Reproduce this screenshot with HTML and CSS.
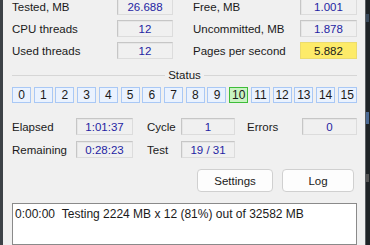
FILE: index.html
```html
<!DOCTYPE html>
<html>
<head>
<meta charset="utf-8">
<link rel="stylesheet" href="styles.css">
</head>
<body>
<div class="screen">
  <div class="edge-left"></div>
  <div class="window">
    <div class="stats">
      <span class="lbl">Tested, MB</span><span class="val">26.688</span>
      <span class="lbl">Free, MB</span><span class="val">1.001</span>
      <span class="lbl">CPU threads</span><span class="val">12</span>
      <span class="lbl">Uncommitted, MB</span><span class="val">1.878</span>
      <span class="lbl">Used threads</span><span class="val">12</span>
      <span class="lbl">Pages per second</span><span class="val hl">5.882</span>
    </div>
    <div class="status-head"><span class="rule"></span><span class="status-title">Status</span><span class="rule"></span></div>
    <div class="threads">
      <span class="th">0</span><span class="th">1</span><span class="th">2</span><span class="th">3</span>
      <span class="th">4</span><span class="th">5</span><span class="th">6</span><span class="th">7</span>
      <span class="th">8</span><span class="th">9</span><span class="th active">10</span><span class="th">11</span>
      <span class="th">12</span><span class="th">13</span><span class="th">14</span><span class="th">15</span>
    </div>
    <div class="times">
      <span class="lbl">Elapsed</span><span class="val">1:01:37</span>
      <span class="lbl">Cycle</span><span class="val">1</span>
      <span class="lbl">Errors</span><span class="val">0</span>
      <span class="lbl">Remaining</span><span class="val">0:28:23</span>
      <span class="lbl">Test</span><span class="val">19 / 31</span>
      <span></span><span></span>
    </div>
    <div class="buttons">
      <button class="btn btn-settings">Settings</button>
      <button class="btn btn-log">Log</button>
    </div>
    <div class="log">0:00:00&nbsp;&nbsp;Testing 2224 MB x 12 (81%) out of 32582 MB</div>
  </div>
  <div class="edge-right"><span class="frag f1"></span><span class="frag f2"></span><span class="frag f3"></span></div>
</div>
</body>
</html>
```
FILE: styles.css
```css
html, body {
  margin: 0;
  padding: 0;
  width: 370px;
  height: 245px;
  overflow: hidden;
  background: #f0f0f0;
  font-family: "Liberation Sans", Arial, sans-serif;
  font-size: 11.5px;
  color: #1a1a1a;
}
.screen {
  display: flex;
  width: 370px;
  height: 245px;
}
.edge-left {
  width: 3px;
  background: #3d4247;
  flex: none;
}
.edge-right {
  width: 5px;
  flex: none;
  background: #1f2326;
  border-left: 1px solid #5a5e62;
  display: flex;
  flex-direction: column;
  gap: 20px;
  padding-top: 14px;
}
.frag { display: block; height: 8px; width: 3px; background: #3a4a5c; }
.f2 { background: #4c6a94; height: 12px; margin-top: 70px; }
.f3 { background: #555; margin-top: 30px; }
.window {
  flex: 1;
  padding: 0 8px 0 9px;
  display: flex;
  flex-direction: column;
}
.stats {
  display: grid;
  grid-template-columns: 105px 76px 107px 57px;
  row-gap: 5px;
  margin-top: -2px;
}
.stats > .val:nth-child(2), .stats > .val:nth-child(6), .stats > .val:nth-child(10) {
  width: 56px;
}
.lbl {
  display: flex;
  align-items: center;
  height: 17px;
  white-space: nowrap;
}
.val {
  box-sizing: border-box;
  height: 17px;
  display: flex;
  align-items: center;
  justify-content: center;
  color: #1f1fa3;
  border: 1px solid #dcdcdc;
  border-top-color: #c6c6c6;
  border-left-color: #c6c6c6;
  box-shadow: inset 1px 1px 0 #e6e6e6;
  background: #f0f0f0;
}
.val.hl {
  background: #fdeb69;
  color: #1a1a1a;
  border-color: #ecdc6e;
  box-shadow: none;
}
.status-head {
  display: flex;
  align-items: center;
  margin-top: 10px;
  height: 18px;
}
.rule {
  flex: 1;
  height: 1px;
  background: #d6d6d6;
}
.status-title {
  padding: 0 3px;
}
.threads {
  display: flex;
  justify-content: space-between;
  margin-top: 6px;
  font-size: 12px;
}
.th {
  box-sizing: border-box;
  width: 19px;
  height: 16px;
  display: flex;
  align-items: center;
  justify-content: center;
  background: #eaf2fe;
  border: 1px solid #a9c8f5;
}
.th.active {
  background: #c9f3c2;
  border-color: #3ebd3a;
}
.times {
  display: grid;
  grid-template-columns: 64px 71px 34px 66px 55px 55px;
  row-gap: 6px;
  margin-top: 15px;
}
.times > .val:nth-child(2) { width: 57px; }
.times > .val:nth-child(4) { width: 54px; }
.times > .val:nth-child(8) { width: 57px; }
.times > .val:nth-child(10) { width: 54px; }
.buttons {
  display: flex;
  justify-content: flex-end;
  gap: 9px;
  margin-top: 11px;
  padding-right: 3px;
}
.btn {
  box-sizing: border-box;
  height: 23px;
  font-family: inherit;
  font-size: 11.5px;
  color: #1a1a1a;
  background: #fdfdfd;
  border: 1px solid #d0d0d0;
  border-radius: 4px;
  padding: 0;
}
.btn-settings { width: 76px; }
.btn-log { width: 72px; }
.log {
  margin-top: 11px;
  height: 60px;
  background: #fff;
  border: 1px solid #8a8a8a;
  padding: 3px 2px;
  white-space: nowrap;
  font-size: 12px;
}
```
